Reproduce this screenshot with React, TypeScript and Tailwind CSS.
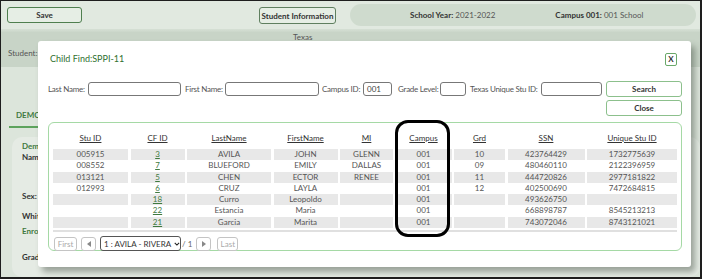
import React from "react";

const cols = [
  { label: "Stu ID", w: 75 },
  { label: "CF ID", w: 54 },
  { label: "LastName", w: 84 },
  { label: "FirstName", w: 64 },
  { label: "MI", w: 53 },
  { label: "Campus", w: 56 },
  { label: "Grd", w: 51 },
  { label: "SSN", w: 77 },
  { label: "Unique Stu ID", w: 90 },
];

const rows = [
  ["005915", "3", "AVILA", "JOHN", "GLENN", "001", "10", "423764429", "1732775639"],
  ["008552", "7", "BLUEFORD", "EMILY", "DALLAS", "001", "09", "480460110", "2122396959"],
  ["013121", "5", "CHEN", "ECTOR", "RENEE", "001", "11", "444720826", "2977181822"],
  ["012993", "6", "CRUZ", "LAYLA", "", "001", "12", "402500690", "7472684815"],
  ["", "18", "Curro", "Leopoldo", "", "001", "", "493626750", ""],
  ["", "22", "Estancia", "Maria", "", "001", "", "668898787", "8545213213"],
  ["", "21", "Garcia", "Marita", "", "001", "", "743072046", "8743121021"],
];

const gridCols =
  "grid grid-cols-[75px_54px_84px_64px_53px_56px_51px_77px_90px] gap-x-[2.5px]";

function Field({
  label,
  lw,
  w,
  gap,
  value,
}: {
  label: string;
  lw: number;
  w: number;
  gap: number;
  value?: string;
}) {
  return (
    <div className="flex items-center" style={{ marginRight: gap }}>
      <span
        className="whitespace-nowrap text-[8px] tracking-[-0.25px] text-[#555]"
        style={{ width: lw }}
      >
        {label}
      </span>
      <div
        className="ml-[2px] h-[14px] rounded-[3px] border border-[#777] bg-white px-[3px] text-[8px] leading-[12px] text-[#444]"
        style={{ width: w }}
      >
        {value}
      </div>
    </div>
  );
}

function PageBtn({ children, w }: { children: React.ReactNode; w: number }) {
  return (
    <div
      className="flex h-[14px] items-center justify-center rounded-[3px] border border-[#c4c4c4] bg-white text-[8px] text-[#aaa]"
      style={{ width: w }}
    >
      {children}
    </div>
  );
}

export default function App() {
  return (
    <div
      className="relative h-[279px] w-[702px] overflow-hidden border-t border-l border-r-2 border-b-2 border-[#1e1e1e] bg-[#dce5db] text-[#444]"
      style={{ fontFamily: "Lato, 'Open Sans', sans-serif" }}
    >
      {/* top bar */}
      <div className="flex h-[28px] items-start bg-[#e1e9e0] pt-[3px]">
        <div className="ml-[6px] mt-[3px] flex h-[16px] w-[75px] items-center justify-center rounded-[3px] border border-[#4f7f4f] bg-[#e6eee5] text-[8px] font-bold text-[#333]">
          Save
        </div>
        <div className="ml-[177px] mt-[3px] flex h-[17px] w-[77px] items-center justify-center whitespace-nowrap rounded-[3px] border border-[#5f7f5f] bg-[#e6eee5] text-[8px] font-bold text-[#333]">
          Student Information
        </div>
        <div className="ml-[14px] flex h-[22px] w-[346px] items-center whitespace-nowrap rounded-full bg-[#cfdbce] text-[8px] text-[#333]">
          <span className="ml-[60px]">
            <b>School Year:</b> <span className="text-[#555]">2021-2022</span>
          </span>
          <span className="ml-[60px]">
            <b>Campus 001:</b> <span className="text-[#555]">001 School</span>
          </span>
        </div>
      </div>
      <div className="h-[5px] bg-gradient-to-b from-[#d6e0d5] to-[#c3d0c2]" />
      {/* header band */}
      <div className="h-[35px] bg-[#c8d4c7]">
        <div className="-mt-[2px] pl-[292px] text-[8px] leading-[10px] text-[#555]">Texas</div>
        <div className="mt-[5px] pl-[7px] text-[8px] text-[#555]">Student:</div>
      </div>
      {/* body */}
      <div className="pl-[8px] pt-[42px]">
        <div className="w-[60px] whitespace-nowrap pl-[7px] text-[8px] font-bold text-[#3f7a3f]">
          DEMOGRAPHIC
        </div>
        <div className="mt-[5px] h-[2px] w-[60px] bg-[#5da35d]" />
        <div className="ml-[3px] mt-[9px] h-[140px] rounded-[10px] bg-[#e5ebe4] pl-[10px] pt-[4px] text-[8px] font-bold leading-[10px] text-[#333]">
          <div className="text-[#3f7a3f]">Demo</div>
          <div className="mt-[1px]">Name:</div>
          <div className="mt-[29px]">Sex:</div>
          <div className="mt-[10px]">White</div>
          <div className="mt-[5px] text-[#3f7a3f]">Enroll</div>
          <div className="mt-[16px]">Grade</div>
        </div>
      </div>

      {/* modal */}
      <div className="absolute left-[37px] top-[40px] h-[226px] w-[653px] rounded-[3px] bg-white pl-[10px] pr-[9px] pt-[11px] shadow-[4px_5px_6px_rgba(60,70,60,0.45)]">
        <div className="flex h-[14px] items-center justify-between pl-[2px] pr-[5px]">
          <span className="text-[9px] text-[#2f702f]">Child Find:SPPI-11</span>
          <div className="flex h-[13px] w-[12px] items-center justify-center rounded-[2px] border border-[#6aa86a] text-[8px] font-bold text-[#333]">
            X
          </div>
        </div>
        <div className="mt-[15px] flex items-start">
          <div className="mt-[1px] flex items-center">
            <Field label="Last Name:" lw={38} w={93} gap={4} />
            <Field label="First Name:" lw={38} w={94} gap={3} />
            <Field label="Campus ID:" lw={39} w={29} gap={6} value="001" />
            <Field label="Grade Level:" lw={40} w={26} gap={4} />
            <Field label="Texas Unique Stu ID:" lw={69} w={61} gap={0} />
          </div>
          <div className="ml-auto flex flex-col gap-[3px]">
            <div className="flex h-[16px] w-[76px] items-center justify-center rounded-[3px] border border-[#8cc08c] text-[8px] font-bold text-[#333]">
              Search
            </div>
            <div className="flex h-[16px] w-[76px] items-center justify-center rounded-[3px] border border-[#8cc08c] text-[8px] font-bold text-[#333]">
              Close
            </div>
          </div>
        </div>

        {/* table */}
        <div className="mt-[6px] h-[129px] w-[634px] rounded-[6px] border border-[#a5d9a5] pl-[4px] pt-[7px]">
          <div className={`${gridCols} h-[15px] items-center`}>
            {cols.map((c) => (
              <div key={c.label} className="text-center text-[8px] text-[#333] underline">
                {c.label}
              </div>
            ))}
          </div>
          <div className="mt-[4px]">
            {rows.map((r, i) => (
              <div key={i} className={`${gridCols} h-[11.3px]`}>
                {r.map((v, j) => (
                  <div
                    key={j}
                    className={`text-center text-[8px] leading-[11.3px] ${
                      i % 2 === 0 ? "bg-[#e8e8e8]" : ""
                    } ${j === 1 ? "text-[#3f7a3f] underline" : "text-[#555]"}`}
                  >
                    {v}
                  </div>
                ))}
              </div>
            ))}
          </div>
          <div className="mt-[2px] h-[2px] w-[624px] bg-[#e0e0e0]" />
          <div className="mt-[4px] flex items-center pl-[1px]">
            <PageBtn w={23}>First</PageBtn>
            <div className="ml-[4px]">
              <PageBtn w={15}>
                <svg width="4" height="6" viewBox="0 0 4 6">
                  <path d="M4 0 L0 3 L4 6 Z" fill="#888" />
                </svg>
              </PageBtn>
            </div>
            <div className="ml-[4px] flex h-[15px] w-[81px] items-center whitespace-nowrap rounded-[3px] border border-[#555] pl-[3px] text-[8px] text-[#333]">
              <span>1 : AVILA - RIVERA</span>
              <svg className="ml-[3px]" width="8" height="6" viewBox="0 0 8 6">
                <path d="M1 1.5 L4 4.5 L7 1.5" stroke="#222" strokeWidth="1.5" fill="none" />
              </svg>
            </div>
            <span className="ml-[1px] text-[8px] text-[#666]">/ 1</span>
            <div className="ml-[4px]">
              <PageBtn w={15}>
                <svg width="4" height="6" viewBox="0 0 4 6">
                  <path d="M0 0 L4 3 L0 6 Z" fill="#888" />
                </svg>
              </PageBtn>
            </div>
            <div className="ml-[6px]">
              <PageBtn w={21}>Last</PageBtn>
            </div>
          </div>
        </div>
      </div>

      {/* annotation around Campus column */}
      <div className="absolute left-[394px] top-[119px] h-[117px] w-[55px] rounded-[13px] border-[3px] border-black" />
    </div>
  );
}
